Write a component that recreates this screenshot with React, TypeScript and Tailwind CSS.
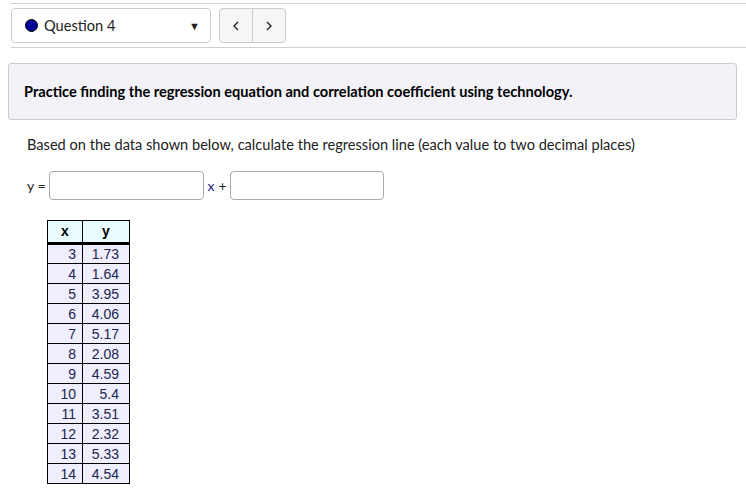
import React from 'react';

const rows: [number, string][] = [
  [3, '1.73'],
  [4, '1.64'],
  [5, '3.95'],
  [6, '4.06'],
  [7, '5.17'],
  [8, '2.08'],
  [9, '4.59'],
  [10, '5.4'],
  [11, '3.51'],
  [12, '2.32'],
  [13, '5.33'],
  [14, '4.54'],
];

function Chevron({ left }: { left?: boolean }) {
  return (
    <svg width="8" height="10" viewBox="0 0 8 10" fill="none" stroke="#222" strokeWidth="1.4">
      <path d={left ? 'M6 1 L2 5 L6 9' : 'M2 1 L6 5 L2 9'} />
    </svg>
  );
}

export default function App() {
  return (
    <div className="w-[746px] h-[492px] overflow-hidden bg-white text-[#222] font-['Lato','Open_Sans',sans-serif]">
      {/* Question nav */}
      <div className="ml-[11px] mt-[3px] border-t border-b border-[#d0d0d0] py-[4px] flex items-center gap-[8px]">
        <div className="w-[200px] h-[35px] border border-[#ccc] rounded-[4px] flex items-center pl-[13px] pr-[10px]">
          <span className="w-[13px] h-[13px] rounded-full bg-[#000099] border border-black" />
          <span className="ml-[6px] text-[14.6px]">Question 4</span>
          <span className="ml-auto text-[11px] leading-none">▼</span>
        </div>
        <div className="h-[35px] w-[67px] border border-[#ccc] rounded-[4px] bg-[#f6f6f6] flex">
          <span className="w-[33px] flex items-center justify-center border-r border-[#ccc]">
            <Chevron left />
          </span>
          <span className="flex-1 flex items-center justify-center">
            <Chevron />
          </span>
        </div>
      </div>

      {/* Intro box */}
      <div className="ml-[8px] mt-[15px] w-[729px] h-[57px] bg-[#f2f2f8] border border-[#ccc] rounded-[3px] flex items-center pl-[15px]">
        <span className="font-bold text-[14.6px] text-black">
          Practice finding the regression equation and correlation coefficient using technology.
        </span>
      </div>

      <div className="pl-[27px]">
        <p className="mt-[16px] text-[14.6px] leading-[18px]">
          Based on the data shown below, calculate the regression line (each value to two decimal places)
        </p>

        <div className="mt-[17px] flex items-center text-[14px]">
          <span>y =</span>
          <div className="ml-[3px] w-[155px] h-[29px] border border-[#aaa] rounded-[4px] bg-white" />
          <span className="ml-[4px] text-[#1a1a8a]">x</span>
          <span className="ml-[4px]">+</span>
          <div className="ml-[3px] w-[154px] h-[29px] border border-[#aaa] rounded-[4px] bg-white" />
        </div>

        <table className="mt-[20px] ml-[20px] border-collapse border border-black font-['Liberation_Sans','Arial',sans-serif] text-[#1c2550]">
          <thead>
            <tr className="bg-[#e8fcff]">
              <th className="h-[21px] w-[35px] p-0 border border-black border-b-[3px] font-bold text-[14px] text-black text-center">x</th>
              <th className="h-[21px] w-[47px] p-0 border border-black border-b-[3px] font-bold text-[14px] text-black text-center">y</th>
            </tr>
          </thead>
          <tbody>
            {rows.map(([x, y]) => (
              <tr key={x} className="bg-[#eeeefc]">
                <td className="h-[20px] p-0 border border-black text-right pr-[6px] text-[14px] leading-[18px]">{x}</td>
                <td className="h-[20px] p-0 border border-black text-right pr-[10px] text-[14px] leading-[18px]">{y}</td>
              </tr>
            ))}
          </tbody>
        </table>
      </div>
    </div>
  );
}
